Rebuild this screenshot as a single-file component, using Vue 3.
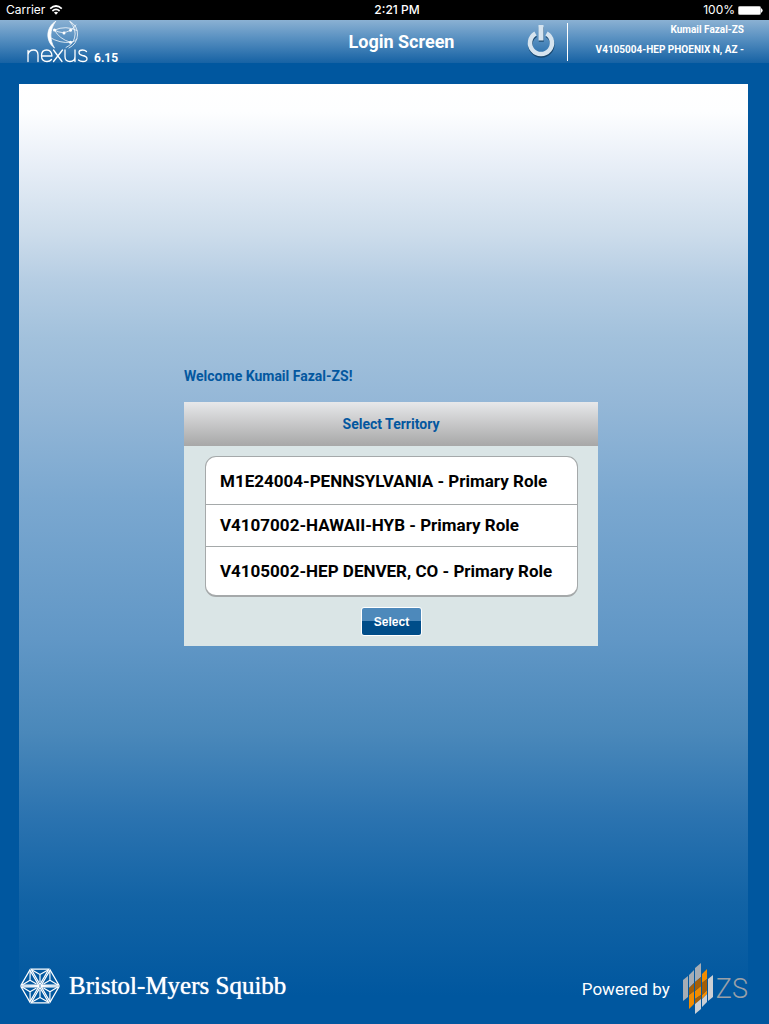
<script setup>
import { ref } from 'vue'

const territories = [
  'M1E24004-PENNSYLVANIA - Primary Role',
  'V4107002-HAWAII-HYB - Primary Role',
  'V4105002-HEP DENVER, CO - Primary Role',
]
const chosen = ref('')
</script>

<template>
  <div class="page">
    <div class="status">
      <div class="carrier">
        <span>Carrier</span>
        <svg width="14" height="10" viewBox="0 0 14 10" fill="none" stroke="#fff" stroke-width="1.7" aria-hidden="true">
          <path d="M1.2 3.6Q7-1.6 12.8 3.6M3.4 6Q7 2.8 10.6 6" />
          <path d="M4.9 7.6Q7 5.8 9.1 7.6L7 9.8Z" fill="#fff" stroke="none" />
        </svg>
      </div>
      <div class="clock">2:21 PM</div>
      <div class="battery">
        <span>100%</span>
        <svg width="25" height="10" viewBox="0 0 25 10" aria-hidden="true">
          <rect x=".5" y="1.5" width="22" height="8" rx="1" fill="#fff" stroke="#bbb" />
          <path d="M23.5 3.7Q25 5.500 23.5 7.300Z" fill="#fff" stroke="#fff" />
        </svg>
      </div>
    </div>

    <header class="header">
      <div class="brand">
        <svg width="62" height="43" viewBox="0 0 62 43" fill="none" stroke="#fff" stroke-linecap="round" stroke-linejoin="round" role="img" aria-label="nexus">
          <path d="M28.500 1.500C19 7 18 21 27.500 28C22.500 20 22.500 10 28.500 1.500Z" fill="#fff" stroke-width=".7" />
          <path d="M43 1.500Q51 6 50.500 15Q50 24 42 28M43 1.500Q50 10 47.500 18Q46 24 39 27.500M27.500 10Q35 15 43.500 10.300Q47.500 8 49 5M27.500 10Q39 5 50 10.500M23 17.500Q33 23.500 43.500 22.300Q48 21.500 50 19M27.500 10Q32 19 43.500 22.300" stroke-width=".9" opacity=".85" />
          <g fill="#fff" stroke="none">
            <circle cx="27.500" cy="10" r="1.500" />
            <circle cx="37" cy="13" r="1.500" />
            <circle cx="43.500" cy="10.300" r="1.500" />
            <circle cx="43.500" cy="22.300" r="1.500" />
          </g>
          <g stroke-width="1.300">
            <path d="M1 41.500V30.500M1 34.500Q2 30 6.500 30Q11 30 11 35V41.500" />
            <path d="M14.500 36H25Q24.500 30 19.700 30Q14.500 30 14.500 35.800Q14.500 41.500 20 41.500Q23 41.500 24.500 39.500" />
            <path d="M26.500 30L35 41.500M35.500 30L26.500 41.500" />
            <path d="M38 30V36.500Q38 41.500 43 41.500Q48 41.500 48 36.500V30M48 36V41.500" />
            <path d="M59.500 31.500Q58 30 55.500 30Q52 30 52 32.500Q52 34.700 55.500 35.500Q60 36.200 60 38.800Q60 41.500 56 41.500Q53 41.500 51.500 40" />
          </g>
        </svg>
        <span class="version">6.15</span>
      </div>
      <h1>Login Screen</h1>
      <div class="session">
        <button class="power" type="button" aria-label="Log out">
          <svg width="30" height="34" viewBox="0 0 30 34" fill="none" aria-hidden="true">
            <g stroke="#17476f" transform="translate(.3 1.200)">
              <path d="M9.500 8.800A11 11 0 1 0 20.500 8.800" stroke-width="4.500" />
              <path d="M15 1V15.500" stroke-width="5" />
            </g>
            <g stroke="#d6e4ef">
              <path d="M9.500 8.500A11 11 0 1 0 20.500 8.500" stroke-width="4.500" />
              <path d="M15 0V15.500" stroke-width="5" />
            </g>
          </svg>
        </button>
        <div class="user">
          <div>Kumail Fazal-ZS</div>
          <div>V4105004-HEP PHOENIX N, AZ -</div>
        </div>
      </div>
    </header>

    <div class="panel">
      <main class="login">
        <section class="box">
          <p class="welcome">Welcome Kumail Fazal-ZS!</p>
          <h2>Select Territory</h2>
          <div class="body">
            <ul class="list">
              <li v-for="t in territories" :key="t">
                <button type="button" :aria-pressed="chosen === t" @click="chosen = t">{{ t }}</button>
              </li>
            </ul>
            <button class="select" type="button">Select</button>
          </div>
        </section>
      </main>

      <footer class="footer">
        <div class="company">
          <svg width="40" height="36" viewBox="-20 -18 40 36" fill="none" stroke="#fff" aria-hidden="true">
            <g v-for="a in [0, 60, 120, 180, 240, 300]" :key="a" :transform="`rotate(${a})`">
              <path d="M0-1.500L8.800-16.800H-8.800Z" stroke-width="1.300" />
              <path d="M0-4V-11.500M0-11.500L8-16M0-11.500L-8-16" stroke-width="1.200" />
            </g>
          </svg>
          <span>Bristol-Myers Squibb</span>
        </div>
        <div class="powered">
          <span>Powered by</span>
          <svg width="31" height="51" viewBox="0 0 31 51" aria-hidden="true">
            <path d="M0 17L5 13V34L0 38ZM6 12L11 7V20L6 25ZM12 5L18 0V14L12 19Z" fill="#a6adb5" />
            <path d="M19 11L24 6V16L19 20ZM6 32L11 28V41L6 46ZM12 28L18 23V32L12 36ZM19 32L24 27V31L19 36Z" fill="#f28c00" />
            <path d="M6 25L11 20V28L6 32ZM12 19L18 14V23L12 28ZM19 20L24 16V27L19 32ZM12 36L18 32V37L12 41Z" fill="#a35e08" />
            <path d="M25 16L30 12V34L25 38ZM19 36L24 31V39L19 44ZM12 41L18 36V46L12 51Z" fill="#ccd0d5" />
          </svg>
          <span class="zs">ZS</span>
        </div>
      </footer>
    </div>
  </div>
</template>

<style>
body {
  background: #00579f;
}
</style>

<style scoped>
* {
  box-sizing: border-box;
  margin: 0;
  padding: 0;
}
.page {
  min-height: 100vh;
  display: flex;
  flex-direction: column;
  background: #00579f;
  font-family: Roboto, "Liberation Sans", sans-serif;
  color: #fff;
}
button {
  font: inherit;
  border: 0;
  background: none;
  cursor: pointer;
}
svg {
  display: block;
  flex: none;
}
.status {
  height: 20px;
  padding: 0 6px;
  display: grid;
  grid-template-columns: 1fr auto 1fr;
  align-items: center;
  background: #000;
  font: 12px/20px Inter, sans-serif;
}
.carrier,
.battery {
  display: flex;
  align-items: center;
  gap: 4px;
}
.battery {
  justify-content: flex-end;
  gap: 3px;
}
.clock {
  padding-left: 25px;
  font-weight: 500;
}
.header {
  height: 43px;
  padding: 0 25px 0 27px;
  display: grid;
  grid-template-columns: 1fr auto 1fr;
  background: linear-gradient(#8bb1d3, #5b92c2 40%, #1662a4);
}
.brand {
  display: flex;
  align-items: flex-end;
  gap: 5px;
}
.version {
  font: 700 12px/10px Roboto, sans-serif;
}
h1 {
  padding-left: 32px;
  font: 700 18px/43px Roboto, sans-serif;
}
.session {
  display: flex;
  justify-content: flex-end;
  align-items: center;
}
.power {
  margin-right: 11px;
}
.user {
  flex: none;
  height: 38px;
  padding: 0 0 1px 28px;
  display: flex;
  flex-direction: column;
  justify-content: flex-end;
  border-left: 1px solid #fff;
  font-size: 10px;
  line-height: 20px;
  font-weight: 700;
  text-align: right;
  white-space: nowrap;
}
.panel {
  flex: 1;
  margin: 21px 21px 0 19px;
  display: flex;
  flex-direction: column;
  background: linear-gradient(
    #fff,
    #fdfeff 3%,
    #eaf0f8 8%,
    #ccdceb 16%,
    #b5cde3 21%,
    #a2c1dc 27%,
    #94b7d7 34%,
    #7ba8d0 44%,
    #6197c6 59%,
    #4a88ba 69%,
    #2b73b0 78%,
    #1263a5 87%,
    #00579f 97%
  );
}
.login {
  flex: 1;
  padding-left: 15px;
  display: flex;
  align-items: center;
  justify-content: center;
}
.box {
  width: 414px;
  max-width: 100%;
}
.welcome {
  padding-bottom: 18px;
  font-size: 14px;
  line-height: 16px;
  font-weight: 700;
  color: #03579f;
}
h2 {
  background: linear-gradient(#e7e8ea, #a7a7a7);
  color: #03579f;
  font: 700 14px/44px Roboto, sans-serif;
  text-align: center;
}
.body {
  padding: 10px 20px 10px 21px;
  background: #dae5e6;
}
.list {
  list-style: none;
  overflow: hidden;
  background: #fff;
  border: 1px solid #a5a9aa;
  border-bottom-width: 2px;
  border-radius: 11px;
}
.list li + li {
  border-top: 1px solid #a5a9aa;
}
.list button {
  display: block;
  width: 100%;
  padding: 14px 14px 13px;
  text-align: left;
  color: #000;
  font-size: 17px;
  line-height: 20px;
  font-weight: 700;
}
.list li:nth-child(2) button {
  padding: 10px 14px 11px;
}
.list li:nth-child(3) button {
  padding: 14px;
}
.select {
  display: block;
  height: 29px;
  margin: 10px auto 0;
  padding: 1px 12px 0;
  border: 1px solid #fff;
  border-radius: 3px;
  background: linear-gradient(#4d89bb 50%, #004d89 50%);
  color: #fff;
  font: 700 12px/26px "Liberation Sans", sans-serif;
}
.footer {
  height: 95px;
  padding: 0 0 10px 1px;
  display: flex;
  justify-content: space-between;
  align-items: flex-end;
}
.company {
  display: flex;
  align-items: center;
  gap: 9px;
  padding-bottom: 10px;
  font: 25px/36px "Liberation Serif", serif;
  text-shadow: 0 0 1px #fff;
}
.powered {
  display: flex;
  align-items: center;
  gap: 13px;
  font-size: 17px;
}
.zs {
  margin-left: -11px;
  font: 300 27px/40px Roboto, sans-serif;
  color: #9aa0a8;
}
</style>
